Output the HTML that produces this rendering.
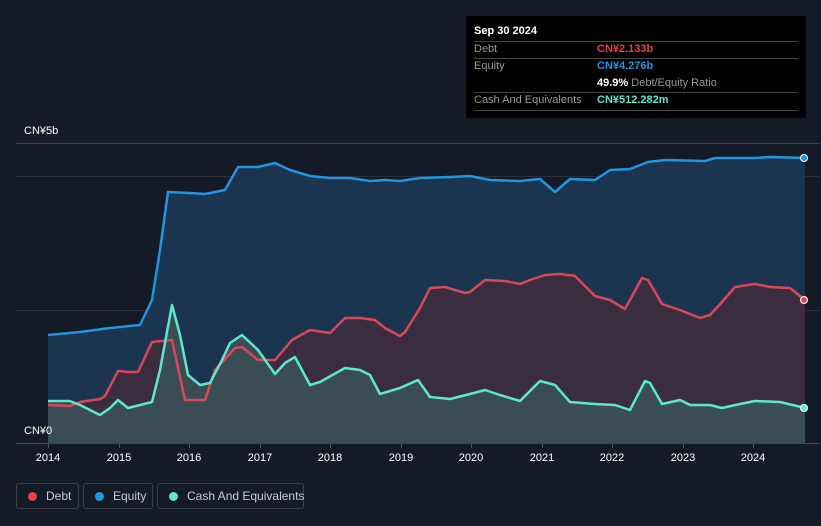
<!DOCTYPE html><html><head><style>
body{margin:0;width:821px;height:526px;background:#151b26;font-family:"Liberation Sans",sans-serif;overflow:hidden;position:relative}
.t{position:absolute;font-size:11px;color:#fff}
.tip{position:absolute;left:466px;top:16px;width:340px;height:102px;background:#000;font-size:11px}
.tip div{position:absolute;white-space:nowrap}
.ln{position:absolute;left:8px;width:324px;height:1px;background:#444}
.lg{position:absolute;top:483px;height:26px;border:1px solid #3a3f4a;border-radius:3px;color:#ccc;font-size:12px;line-height:24px;box-sizing:border-box;white-space:nowrap}
.lg i{display:inline-block;width:9px;height:9px;border-radius:50%;margin:0 9px 0 11px;vertical-align:-1px}
</style></head><body>
<svg width="821" height="526" style="position:absolute;left:0;top:0">
<line x1="16" y1="143.5" x2="820" y2="143.5" stroke="#40454f"/>
<line x1="16" y1="176.5" x2="820" y2="176.5" stroke="#2a2f3a"/>
<line x1="16" y1="310.5" x2="820" y2="310.5" stroke="#2a2f3a"/>
<line x1="16" y1="443.5" x2="820" y2="443.5" stroke="#40454f"/>
<g fill="none" stroke-linejoin="round">
<polygon fill="#1b3450" points="48,443 48,335 80,332 110,328 140,325 152,300 160,250 168,192 190,193 205,194 225,190 238,167 258,167 275,163 290,170 310,176 330,178 350,178 370,181 385,180 400,181 420,178 450,177 470,176 490,180 520,181 540,179 555,192 570,179 595,180 610,170 630,169 648,162 665,160 705,161 715,158 755,158 770,157 805,158 805,443"/>
<polygon fill="#3b2d40" points="48,443 48,405 70,406 80,402 100,399 105,396 118,371 128,372 138,372 152,342 172,340 185,400 205,400 215,370 235,348 242,347 258,360 275,360 292,340 310,330 330,333 345,318 360,318 375,320 385,328 400,336 405,332 420,308 430,288 445,287 465,293 470,292 485,280 505,281 520,284 530,280 545,275 560,274 575,276 595,296 610,300 625,309 642,278 648,280 662,304 680,310 700,318 710,315 722,302 735,287 755,284 770,287 790,288 805,300 805,443"/>
<polygon fill="#3a4d55" points="48,443 48,401 70,401 80,405 100,415 110,408 118,400 128,408 140,405 152,402 160,370 172,305 180,335 188,375 200,385 210,383 222,360 230,343 242,335 258,350 275,374 285,363 295,357 310,385 320,382 345,368 360,370 370,375 380,394 400,388 418,380 430,397 450,399 470,394 485,390 500,395 520,401 540,381 555,385 570,402 595,404 615,405 630,410 645,381 650,383 662,404 680,400 690,405 710,405 722,408 740,404 755,401 780,402 805,408 805,443"/>
<polyline stroke="#2394df" stroke-width="2.5" points="48,335 80,332 110,328 140,325 152,300 160,250 168,192 190,193 205,194 225,190 238,167 258,167 275,163 290,170 310,176 330,178 350,178 370,181 385,180 400,181 420,178 450,177 470,176 490,180 520,181 540,179 555,192 570,179 595,180 610,170 630,169 648,162 665,160 705,161 715,158 755,158 770,157 805,158"/>
<polyline stroke="#d9485a" stroke-width="2.5" points="48,405 70,406 80,402 100,399 105,396 118,371 128,372 138,372 152,342 172,340 185,400 205,400 215,370 235,348 242,347 258,360 275,360 292,340 310,330 330,333 345,318 360,318 375,320 385,328 400,336 405,332 420,308 430,288 445,287 465,293 470,292 485,280 505,281 520,284 530,280 545,275 560,274 575,276 595,296 610,300 625,309 642,278 648,280 662,304 680,310 700,318 710,315 722,302 735,287 755,284 770,287 790,288 805,300"/>
<polyline stroke="#5ee6cf" stroke-width="2.5" points="48,401 70,401 80,405 100,415 110,408 118,400 128,408 140,405 152,402 160,370 172,305 180,335 188,375 200,385 210,383 222,360 230,343 242,335 258,350 275,374 285,363 295,357 310,385 320,382 345,368 360,370 370,375 380,394 400,388 418,380 430,397 450,399 470,394 485,390 500,395 520,401 540,381 555,385 570,402 595,404 615,405 630,410 645,381 650,383 662,404 680,400 690,405 710,405 722,408 740,404 755,401 780,402 805,408"/>
</g>
<circle cx="804" cy="158" r="3.5" fill="#2394df" stroke="#fff"/>
<circle cx="804" cy="300" r="3.5" fill="#d9485a" stroke="#fff"/>
<circle cx="804" cy="408" r="3.5" fill="#5ee6cf" stroke="#fff"/>
<g stroke="#555"><line x1="48.5" y1="443" x2="48.5" y2="448"/><line x1="119.5" y1="443" x2="119.5" y2="448"/><line x1="189.5" y1="443" x2="189.5" y2="448"/><line x1="260.5" y1="443" x2="260.5" y2="448"/><line x1="330.5" y1="443" x2="330.5" y2="448"/><line x1="401.5" y1="443" x2="401.5" y2="448"/><line x1="471.5" y1="443" x2="471.5" y2="448"/><line x1="542.5" y1="443" x2="542.5" y2="448"/><line x1="612.5" y1="443" x2="612.5" y2="448"/><line x1="683.5" y1="443" x2="683.5" y2="448"/><line x1="753.5" y1="443" x2="753.5" y2="448"/></g>
<g fill="#fff" font-size="11" text-anchor="middle" font-family="Liberation Sans,sans-serif">
<text x="48" y="461">2014</text><text x="119" y="461">2015</text><text x="189" y="461">2016</text><text x="260" y="461">2017</text><text x="330" y="461">2018</text><text x="401" y="461">2019</text><text x="471" y="461">2020</text><text x="542" y="461">2021</text><text x="612" y="461">2022</text><text x="683" y="461">2023</text><text x="753" y="461">2024</text></g>
</svg>
<div class="t" style="left:24px;top:125px">CN¥5b</div>
<div class="t" style="left:24px;top:425px">CN¥0</div>
<div class="tip">
<div style="left:8px;top:9px;color:#fff;font-weight:bold;font-size:11px">Sep 30 2024</div>
<div class="ln" style="top:25px"></div>
<div style="left:8px;top:27px;color:#999">Debt</div><div style="left:131px;top:27px;color:#e5424d;font-weight:bold">CN¥2.133b</div>
<div class="ln" style="top:42px"></div>
<div style="left:8px;top:44px;color:#999">Equity</div><div style="left:131px;top:44px;color:#2394df;font-weight:bold">CN¥4.276b</div>
<div style="left:131px;top:61px;color:#999"><b style="color:#fff">49.9%</b> Debt/Equity Ratio</div>
<div class="ln" style="top:76px"></div>
<div style="left:8px;top:78px;color:#999">Cash And Equivalents</div><div style="left:131px;top:78px;color:#5ee6cf;font-weight:bold">CN¥512.282m</div>
<div class="ln" style="top:94px"></div>
</div>
<div class="lg" style="left:16px;width:63px"><i style="background:#e5424d"></i>Debt</div>
<div class="lg" style="left:83px;width:70px"><i style="background:#2394df"></i>Equity</div>
<div class="lg" style="left:157px;width:147px"><i style="background:#5ee6cf"></i>Cash And Equivalents</div>
</body></html>
